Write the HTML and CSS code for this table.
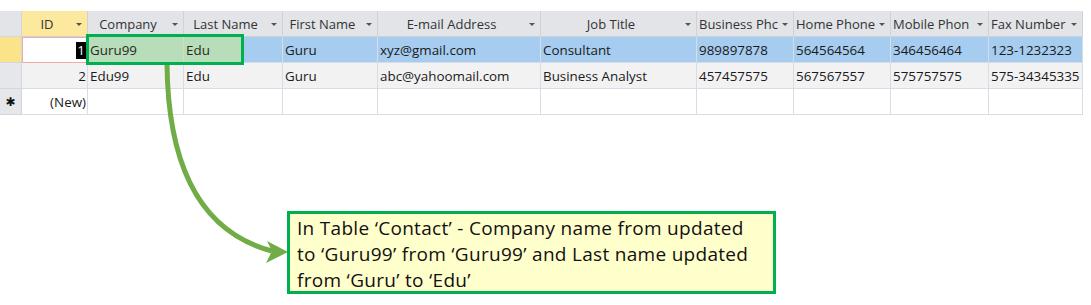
FILE: index.html
```html
<!DOCTYPE html>
<html>
<head>
<meta charset="utf-8">
<link rel="stylesheet" href="styles.css">
</head>
<body>
<div class="page">
  <div class="grid">
    <div class="sel hsel"></div>
    <div class="hd hd-id"><span class="ht">ID</span><i class="dd"></i></div>
    <div class="hd"><span class="ht">Company</span><i class="dd"></i></div>
    <div class="hd"><span class="ht">Last Name</span><i class="dd"></i></div>
    <div class="hd"><span class="ht">First Name</span><i class="dd"></i></div>
    <div class="hd"><span class="ht">E-mail Address</span><i class="dd"></i></div>
    <div class="hd"><span class="ht">Job Title</span><i class="dd"></i></div>
    <div class="hd"><span class="ht left">Business Phc</span><i class="dd"></i></div>
    <div class="hd"><span class="ht left">Home Phone</span><i class="dd"></i></div>
    <div class="hd"><span class="ht left">Mobile Phon</span><i class="dd"></i></div>
    <div class="hd"><span class="ht left">Fax Number</span><i class="dd"></i></div>

    <div class="sel cur"></div>
    <div class="c r1 num idcur"><span class="seltext">1</span></div>
    <div class="c r1"><span class="above">Guru99</span></div>
    <div class="c r1"><span class="above">Edu</span></div>
    <div class="c r1">Guru</div>
    <div class="c r1">xyz@gmail.com</div>
    <div class="c r1">Consultant</div>
    <div class="c r1">989897878</div>
    <div class="c r1">564564564</div>
    <div class="c r1">346456464</div>
    <div class="c r1">123-1232323</div>

    <div class="sel"></div>
    <div class="c r2 num">2</div>
    <div class="c r2">Edu99</div>
    <div class="c r2">Edu</div>
    <div class="c r2">Guru</div>
    <div class="c r2">abc@yahoomail.com</div>
    <div class="c r2">Business Analyst</div>
    <div class="c r2">457457575</div>
    <div class="c r2">567567557</div>
    <div class="c r2">575757575</div>
    <div class="c r2">575-34345335</div>

    <div class="sel newsel">✱</div>
    <div class="c r3 num">(New)</div>
    <div class="c r3"></div>
    <div class="c r3"></div>
    <div class="c r3"></div>
    <div class="c r3"></div>
    <div class="c r3"></div>
    <div class="c r3"></div>
    <div class="c r3"></div>
    <div class="c r3"></div>
    <div class="c r3"></div>
  </div>

  <div class="highlight"></div>

  <svg class="arrow" width="1091" height="305" viewBox="0 0 1091 305">
    <path d="M167 64 C168 165 200 232 272 251" fill="none" stroke="#70ad47" stroke-width="5"/>
    <polygon points="288,252 267,241 272,251 266,263" fill="#70ad47"/>
  </svg>

  <div class="callout">In Table ‘Contact’ - Company name from updated<br>to ‘Guru99’ from ‘Guru99’ and Last name updated<br>from ‘Guru’ to ‘Edu’</div>
</div>
</body>
</html>
```

FILE: styles.css
```css
* { box-sizing: border-box; }
html, body { margin: 0; padding: 0; background: #fff; }
.page {
  position: relative;
  width: 1091px;
  height: 305px;
  padding-top: 11px;
  font-family: "Open Sans", "Liberation Sans", sans-serif;
}
.grid {
  display: grid;
  grid-template-columns: 22px 66px 96px 99px 95px 163px 156px 97px 97px 98px 94px;
  grid-template-rows: 26px 26px 26px 26px;
  width: 1083px;
  font-size: 13.4px;
  color: #1a1a1a;
}
.sel {
  background: #e6e7eb;
  border-right: 1px solid #d3d6dd;
  border-bottom: 1px solid #d3d6dd;
}
.hsel { background: #e2e4e8; }
.sel.cur { background: #fbe389; }
.newsel {
  font-family: "DejaVu Sans", sans-serif;
  font-size: 12px;
  display: flex;
  align-items: center;
  justify-content: center;
  color: #111;
  background: #e6e7eb;
}
.hd {
  background: #e2e4e8;
  border-right: 1px solid #cdd1d9;
  border-bottom: 1px solid #cdd1d9;
  display: flex;
  align-items: center;
  padding-right: 5px;
  color: #333;
  font-size: 13px;
}
.hd-id { background: #fce99e; }
.ht {
  flex: 1;
  min-width: 0;
  text-align: center;
  white-space: nowrap;
  margin-right: 4px;
}
.ht.left { text-align: left; padding-left: 2px; margin-right: 3px; }
.dd {
  flex: none;
  width: 0;
  height: 0;
  border-left: 3px solid transparent;
  border-right: 3px solid transparent;
  border-top: 3px solid #555;
  margin-top: 2px;
}
.c {
  border-right: 1px solid #d7dce6;
  border-bottom: 1px solid #d7dce6;
  padding: 0 2px;
  display: flex;
  align-items: center;
  white-space: nowrap;
  overflow: hidden;
}
.r1 { background: #a6cdf0; }
.r2 { background: #f2f2f2; }
.r3 { background: #ffffff; }
.num { justify-content: flex-end; padding-right: 1px; }
.idcur {
  background: #fff;
  border: 1px solid #f2a9a9;
}
.seltext {
  background: #000;
  color: #fff;
  line-height: 17px;
  padding: 0 1px;
}
.above {
  position: relative;
  z-index: 2;
  color: #2a2a1a;
}
.highlight {
  position: absolute;
  z-index: 1;
  left: 86px;
  top: 34px;
  width: 158px;
  height: 31px;
  border: 3px solid #00b050;
  background: rgba(195, 232, 150, 0.6);
}
.arrow {
  position: absolute;
  left: 0;
  top: 0;
  pointer-events: none;
}
.callout {
  position: absolute;
  left: 287px;
  top: 211px;
  width: 489px;
  height: 83px;
  border: 3px solid #00b050;
  background: #ffffcc;
  padding: 1px 7px;
  font-size: 19px;
  letter-spacing: 0.3px;
  line-height: 26px;
  white-space: nowrap;
  color: #111;
}
```
